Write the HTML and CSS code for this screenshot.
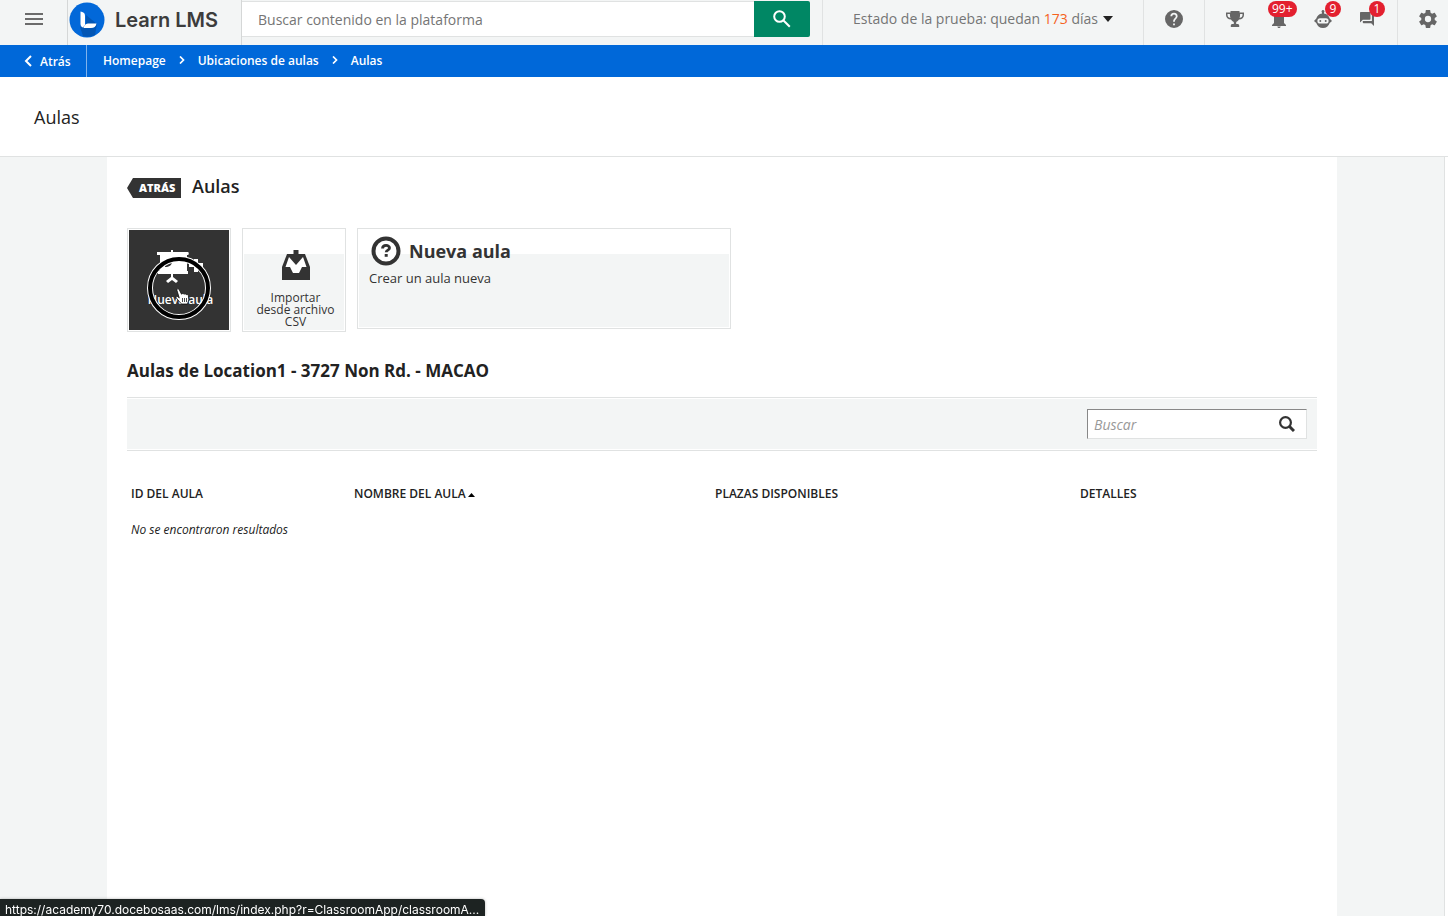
FILE: index.html
```html
<!DOCTYPE html>
<html lang="es">
<head>
    <meta charset="UTF-8">
    <meta name="viewport" content="width=device-width, initial-scale=1.0">
    <title>Aulas - Learn LMS</title>
    <link rel="stylesheet" href="styles.css">
</head>
<body>
    <header class="header">
        <button class="icon-btn menu-btn" aria-label="Menú">
            <svg width="18" height="12" viewBox="0 0 18 12" fill="#6b6b6b"><path d="M0 0h18v2H0zM0 5h18v2H0zM0 10h18v2H0z"/></svg>
        </button>
        <a href="#" class="logo">
            <svg width="36" height="36" viewBox="0 0 36 36">
                <circle cx="18" cy="18" r="17.5" fill="#0268d9"/>
                <path d="M17 13l11 9-2 11a17 17 0 0 1-12 1L11 25l6-2z" fill="#0256b4"/>
                <path d="M11.500 9.500c2.500.3 4.500 1.500 4.500 4V23l-2 2.500c-1.800-.5-2.500-2-2.500-4z" fill="#fff"/>
                <path d="M14.500 26c1-3.500 2.500-4.500 5.500-4.500h7.500c-.5 3-2.500 4.500-5.500 4.500z" fill="#fff"/>
            </svg>
            <span>Learn LMS</span>
        </a>
        <form class="search">
            <input type="text" placeholder="Buscar contenido en la plataforma" aria-label="Buscar contenido en la plataforma">
            <button type="button" aria-label="Buscar">
                <svg width="18" height="18" viewBox="0 0 18 18" fill="none" stroke="#fff" stroke-width="2"><circle cx="6.500" cy="6.500" r="5.300"/><path d="M10.500 10.500l6.300 6.300"/></svg>
            </button>
        </form>
        <button class="trial">
            <span>Estado de la prueba: quedan <b>173</b> días</span>
            <svg width="10" height="6" viewBox="0 0 10 6"><path d="M0 0h10L5 6z" fill="#222"/></svg>
        </button>
        <button class="icon-btn help-btn" aria-label="Ayuda">
            <svg width="18" height="18" viewBox="2 2 20 20" fill="#666"><path d="M12 2a10 10 0 1 0 0 20 10 10 0 0 0 0-20zm1 17h-2v-2h2zm2.070-7.750l-.9.920C13.450 12.900 13 13.500 13 15h-2v-.5c0-1.100.45-2.100 1.170-2.830l1.240-1.260c.37-.36.59-.86.59-1.410a2 2 0 0 0-4 0H8a4 4 0 0 1 8 0c0 .88-.36 1.680-.93 2.250z"/></svg>
        </button>
        <nav class="tools">
            <button class="icon-btn" aria-label="Logros">
                <svg width="18" height="16" viewBox="0 0 18 16" fill="#666"><path d="M4.500 0h9v1.500H18V4c0 2.700-2 4.300-5 4.600-.7 1.300-1.700 2-2.800 2.300V13h1.300c1 0 1.700.7 1.700 1.500V16H4.800v-1.500c0-.8.7-1.500 1.700-1.500h1.300v-2.100C6.700 10.600 5.700 9.900 5 8.600 2 8.300 0 6.700 0 4V1.500h4.500zM1.500 3v1c0 1.500 1 2.500 2.900 3C4 5.800 3.900 4.500 3.900 3zm12.600 0c0 1.500-.1 2.800-.5 4 1.900-.5 2.900-1.500 2.900-3V3z"/></svg>
            </button>
            <button class="icon-btn" aria-label="Notificaciones">
                <svg width="14" height="18" viewBox="0 0 14 18" fill="#666"><path d="M7 0c.8 0 1.300.6 1.300 1.300v.6C10.700 2.500 12 4.500 12 7v6l2 2v1H0v-1l2-2V7c0-2.500 1.300-4.500 3.700-5.100v-.6C5.700.6 6.200 0 7 0zM5.300 16.500h3.400c0 .9-.7 1.500-1.700 1.500s-1.700-.6-1.700-1.500z"/></svg>
                <span class="badge">99+</span>
            </button>
            <button class="icon-btn" aria-label="Asistente">
                <svg width="18" height="18" viewBox="0 0 18 18" fill="#666"><path fill-rule="evenodd" d="M9 0a1.500 1.500 0 0 1 1 2.600v1C13 4 15 6 15.700 8.500L18 11l-2.300 2c-1 3-3.500 5-6.700 5s-5.700-2-6.700-5L0 11l2.300-2.500C3 6 5 4 8 3.600v-1A1.500 1.500 0 0 1 9 0zM6 8.300a2.600 2.600 0 0 0 0 5.200h6a2.600 2.600 0 0 0 0-5.200zM6.300 10a1 1 0 1 1 0 2 1 1 0 0 1 0-2zm5.400 0a1 1 0 1 1 0 2 1 1 0 0 1 0-2z"/></svg>
                <span class="badge">9</span>
            </button>
            <button class="icon-btn" aria-label="Mensajes">
                <svg width="14" height="14" viewBox="2 2 20 20" fill="#666"><path d="M21 6h-2v9H6v2c0 .55.45 1 1 1h11l4 4V7c0-.55-.45-1-1-1zm-4 6V3c0-.55-.45-1-1-1H3c-.55 0-1 .45-1 1v14l4-4h10c.55 0 1-.45 1-1z"/></svg>
                <span class="badge">1</span>
            </button>
        </nav>
        <button class="icon-btn settings-btn" aria-label="Configuración">
            <svg width="18" height="18" viewBox="2 2 20 20" fill="#666"><path d="M19.430 12.980c.04-.32.070-.64.070-.98s-.03-.66-.07-.98l2.110-1.650c.19-.15.240-.42.120-.64l-2-3.460c-.12-.22-.39-.3-.61-.22l-2.490 1c-.52-.4-1.080-.73-1.690-.98l-.38-2.650C14.460 2.180 14.250 2 14 2h-4c-.25 0-.46.18-.49.42l-.38 2.650c-.61.25-1.170.59-1.690.98l-2.490-1c-.23-.09-.49 0-.61.22l-2 3.460c-.13.22-.07.49.12.64l2.110 1.650c-.04.32-.07.65-.07.98s.03.66.07.98l-2.110 1.650c-.19.15-.24.42-.12.64l2 3.460c.12.22.39.3.61.22l2.490-1c.52.4 1.080.73 1.690.98l.38 2.650c.03.24.24.42.49.42h4c.25 0 .46-.18.49-.42l.38-2.650c.61-.25 1.170-.59 1.690-.98l2.490 1c.23.09.49 0 .61-.22l2-3.460c.12-.22.070-.49-.12-.64zM12 15.500a3.500 3.500 0 1 1 0-7 3.500 3.500 0 0 1 0 7z"/></svg>
        </button>
    </header>

    <nav class="breadcrumb">
        <a href="#" class="back">
            <svg width="8" height="12" viewBox="0 0 8 12" fill="none" stroke="#fff" stroke-width="2"><path d="M7 1L2 6l5 5"/></svg>
            Atrás
        </a>
        <div class="crumbs">
            <a href="#">Homepage</a>
            <svg width="6" height="8" viewBox="0 0 6 8" fill="none" stroke="#fff" stroke-width="1.700"><path d="M1 .5L4.500 4 1 7.500"/></svg>
            <a href="#">Ubicaciones de aulas</a>
            <svg width="6" height="8" viewBox="0 0 6 8" fill="none" stroke="#fff" stroke-width="1.700"><path d="M1 .5L4.500 4 1 7.500"/></svg>
            <a href="#">Aulas</a>
        </div>
    </nav>

    <div class="page-title">
        <h1>Aulas</h1>
    </div>

    <div class="page">
        <main class="content">
            <div class="heading">
                <a href="#" class="back-tag">ATRÁS</a>
                <h2>Aulas</h2>
            </div>

            <div class="cards">
                <a href="#" class="card active">
                    <svg class="card-icon" width="48" height="34" viewBox="0 0 48 34" fill="#fff">
                        <path d="M14 0h2v2h15c1 0 1 3 0 3h-1v16h1v3H1v-3h2V5H0V2h14zM14 24h2v3l5 4-2 2-4-3-4 3-2-2 5-4z"/>
                        <path d="M8 17c0-3 3-5 7-5 0 3-3 5-7 5zM18 10h8v1h-8z" fill="#333"/>
                        <path d="M37 9h4v4h5v4h-5v5h-4v-5h-5v-4h5z"/>
                    </svg>
                    <span>Nueva aula</span>
                    <svg class="pointer" width="64" height="64" viewBox="0 0 64 64">
                        <circle cx="32" cy="32" r="29" fill="none" stroke="#fff" stroke-width="6"/>
                        <circle cx="32" cy="32" r="29" fill="none" stroke="#000" stroke-width="4"/>
                        <path d="M30 34.500c-.6-1.600 1.500-2.300 2.200-.8l2.300 4.500c.8-1 2-.8 2.500.1.8-.8 1.900-.5 2.300.4 1-.6 2 0 2.100 1.100l.4 4-1.300 4.200h-6L29.300 42c-1-1.600.6-2.400 1.700-1.200l1.300 1.200z" fill="#fff" stroke="#000" stroke-width=".7"/>
                        <path d="M35.500 42v4m2-4v4m2-4v4" stroke="#000" stroke-width=".7"/>
                    </svg>
                </a>
                <a href="#" class="card">
                    <svg class="card-icon" width="28" height="30" viewBox="0 0 28 30" fill="#333">
                        <path d="M5 4h18l5 13v13H0V17z"/>
                        <path d="M3.500 17L7 7h14l3.500 10H20l-3 6h-6l-3-6z" fill="#fff"/>
                        <path d="M11.500 0h5v7H21l-7 8-7-8h4.500z"/>
                    </svg>
                    <span>Importar desde archivo CSV</span>
                </a>
                <div class="card info">
                    <h3>
                        <svg width="30" height="30" viewBox="0 0 30 30">
                            <circle cx="15" cy="15" r="12.500" fill="#fff" stroke="#333" stroke-width="4"/>
                            <path d="M11.500 12.500c.2-4 7-4 7-.5 0 2.200-3.300 2-3.300 4.300" fill="none" stroke="#333" stroke-width="2.800"/>
                            <path d="M13.700 18h3v2.800h-3z" fill="#333"/>
                        </svg>
                        Nueva aula
                    </h3>
                    <p>Crear un aula nueva</p>
                </div>
            </div>

            <h3 class="location">Aulas de Location1 - 3727 Non Rd. - MACAO</h3>

            <div class="filter">
                <div class="filter-box">
                    <input type="text" placeholder="Buscar" aria-label="Buscar aulas">
                    <button aria-label="Buscar">
                        <svg width="16" height="16" viewBox="0 0 16 16" fill="none" stroke="#333"><circle cx="6.500" cy="6.500" r="5.400" stroke-width="2.200"/><path d="M10.500 10.500l4.500 4.500" stroke-width="3"/></svg>
                    </button>
                </div>
            </div>

            <table>
                <thead>
                    <tr>
                        <th class="col-id">ID DEL AULA</th>
                        <th class="col-name">NOMBRE DEL AULA<svg width="7" height="4" viewBox="0 0 7 4"><path d="M3.500 0L7 4H0z" fill="#000"/></svg></th>
                        <th class="col-seats">PLAZAS DISPONIBLES</th>
                        <th>DETALLES</th>
                    </tr>
                </thead>
                <tbody>
                    <tr>
                        <td colspan="4"><em>No se encontraron resultados</em></td>
                    </tr>
                </tbody>
            </table>
        </main>
    </div>

    <div class="status-bar">https://academy70.docebosaas.com/lms/index.php?r=ClassroomApp/classroomA...</div>
</body>
</html>
```
FILE: styles.css
```css
* {
    box-sizing: border-box;
}

body {
    margin: 0;
    min-height: 100vh;
    display: flex;
    flex-direction: column;
    font-family: "Open Sans", sans-serif;
    font-size: 12px;
    color: #222;
    background-color: #fff;
}

h1, h2, h3, p {
    margin: 0;
}

a {
    color: inherit;
    text-decoration: none;
}

button {
    border: none;
    padding: 0;
    background: none;
    font-family: inherit;
    cursor: pointer;
}

svg {
    display: block;
    flex-shrink: 0;
}

input {
    font-family: inherit;
    min-width: 0;
    border: none;
    outline: none;
}

/* top bar */
.header {
    display: flex;
    height: 45px;
    background-color: #f3f5f5;
}

.icon-btn {
    position: relative;
    display: flex;
    align-items: center;
    justify-content: center;
    padding-bottom: 7px;
}

.menu-btn {
    width: 67px;
}

.logo {
    display: flex;
    align-items: center;
    gap: 10px;
    width: 175px;
    padding: 0 0 6px 1px;
    border-left: 1px solid #d5d7d7;
    border-right: 1px solid #d5d7d7;
    font-family: Inter, sans-serif;
    font-size: 20px;
    font-weight: 600;
    color: #3c3c3c;
    white-space: nowrap;
}

.search {
    display: flex;
    flex: 1;
    height: 36px;
    margin: 1px 12px 0 0;
}

.search input {
    flex: 1;
    padding: 0 16px;
    border-top: 1px solid #e0e2e2;
    border-bottom: 1px solid #e0e2e2;
    font-size: 14px;
    background-color: #fff;
}

.search input::placeholder {
    color: #757575;
}

.search button {
    display: flex;
    align-items: center;
    justify-content: center;
    width: 56px;
    background-color: #008764;
    border-radius: 0 2px 2px 0;
}

.trial {
    display: flex;
    align-items: center;
    justify-content: center;
    gap: 5px;
    width: 321px;
    padding-bottom: 8px;
    border-left: 1px solid #e0e2e2;
    font-size: 14px;
    color: #757575;
}

.trial b {
    font-weight: 400;
    color: #f5631e;
}

.help-btn {
    width: 61px;
    border-left: 1px solid #e0e2e2;
}

.tools {
    display: flex;
    width: 193px;
    padding-left: 8px;
    border-left: 1px solid #e0e2e2;
}

.tools .icon-btn {
    width: 44px;
}

.badge {
    position: absolute;
    top: 1px;
    left: 24px;
    min-width: 16px;
    padding: 0 4px;
    border-radius: 8px;
    font-size: 12px;
    line-height: 16px;
    color: #fff;
    background-color: #e3202f;
}

.tools .icon-btn:nth-child(2) .badge {
    left: 11px;
}

.settings-btn {
    width: 51px;
    padding-left: 10px;
    border-left: 1px solid #e0e2e2;
}

/* breadcrumb */
.breadcrumb {
    display: flex;
    height: 32px;
    font-weight: 600;
    color: #fff;
    background-color: #0068d9;
}

.back {
    display: flex;
    align-items: center;
    gap: 8px;
    width: 87px;
    padding-left: 24px;
    border-right: 1px solid #80b3ec;
}

.crumbs {
    display: flex;
    align-items: center;
    gap: 13px;
    padding: 0 16px 2px;
}

.page-title {
    height: 80px;
    padding: 0 34px;
    border-bottom: 1px solid #e0e2e2;
}

.page-title h1 {
    font-size: 18px;
    font-weight: 500;
    line-height: 80px;
}

/* content */
.page {
    flex: 1;
    display: flex;
    justify-content: center;
    margin-right: 3px;
    border-right: 1px solid #e0e2e2;
    background-color: #f3f5f5;
}

.content {
    width: 100%;
    max-width: 1230px;
    padding: 16px 20px;
    background-color: #fff;
}

.heading {
    display: flex;
    align-items: flex-end;
    gap: 11px;
    height: 25px;
}

.heading h2 {
    font-size: 18px;
    font-weight: 600;
    line-height: 24px;
}

.back-tag {
    width: 54px;
    padding-left: 12px;
    font-size: 11px;
    font-weight: 800;
    line-height: 20px;
    color: #fff;
    background-color: #333;
    clip-path: polygon(0 50%, 6px 0, 100% 0, 100% 100%, 6px 100%);
}

.cards {
    display: flex;
    align-items: flex-start;
    gap: 11px;
    margin-top: 30px;
}

.card {
    position: relative;
    display: flex;
    flex-direction: column;
    align-items: center;
    width: 104px;
    height: 104px;
    padding: 1px;
    border: 1px solid #e0e2e2;
    text-align: center;
    line-height: 12px;
    color: #333;
    background: linear-gradient(#fff 24px, #f3f5f5 24px) content-box;
}

.card.active {
    color: #fff;
    font-weight: 600;
    background: #333 content-box;
}

.card-icon {
    margin: 20px 0 12px 3px;
}

.card.active .card-icon {
    margin-bottom: 10px;
}

.card span {
    margin: 0 6px 0 9px;
}

.pointer {
    position: absolute;
    top: 27px;
    left: 19px;
}

.info {
    display: block;
    width: 374px;
    height: 101px;
    text-align: left;
}

.info h3 {
    display: flex;
    align-items: center;
    gap: 8px;
    padding: 6px 0 0 12px;
    font-size: 18px;
    font-weight: 700;
}

.info p {
    padding: 3px 10px;
    font-size: 13px;
    line-height: 18px;
}

.location {
    margin: 26px 0 14px;
    font-size: 17px;
    line-height: 25px;
}

.filter {
    display: flex;
    justify-content: flex-end;
    padding: 11px 10px;
    border-top: 1px solid #e0e2e2;
    border-bottom: 1px solid #e0e2e2;
    background-color: #f3f5f5;
    box-shadow: inset 0 1px #fff, inset 0 -1px #fff;
}

.filter-box {
    display: flex;
    align-items: center;
    width: 220px;
    height: 30px;
    padding: 0 11px 0 6px;
    border: 1px solid #e0e2e2;
    border-top-color: #888;
    border-left-color: #888;
    background-color: #fff;
}

.filter-box input {
    flex: 1;
    padding: 0;
    font-size: 14px;
    font-style: italic;
}

.filter-box input::placeholder {
    color: #999;
}

table {
    width: 100%;
    margin-top: 24px;
    border-collapse: collapse;
    table-layout: fixed;
}

th, td {
    height: 36px;
    padding: 0 4px;
    text-align: left;
}

th {
    font-weight: 600;
}

th svg {
    display: inline-block;
    margin: 0 0 1px 2px;
}

.col-id {
    width: 223px;
}

.col-name {
    width: 361px;
}

.col-seats {
    width: 365px;
}

/* link preview at the bottom of the window */
.status-bar {
    position: fixed;
    bottom: 0;
    left: 0;
    height: 17px;
    padding: 0 6px 0 5px;
    border-top-right-radius: 4px;
    font-family: Inter, sans-serif;
    font-size: 12px;
    line-height: 22px;
    color: #fff;
    background-color: #1d2322;
    box-shadow: 0 0 3px rgba(0, 0, 0, 0.3);
    overflow: hidden;
}
```
